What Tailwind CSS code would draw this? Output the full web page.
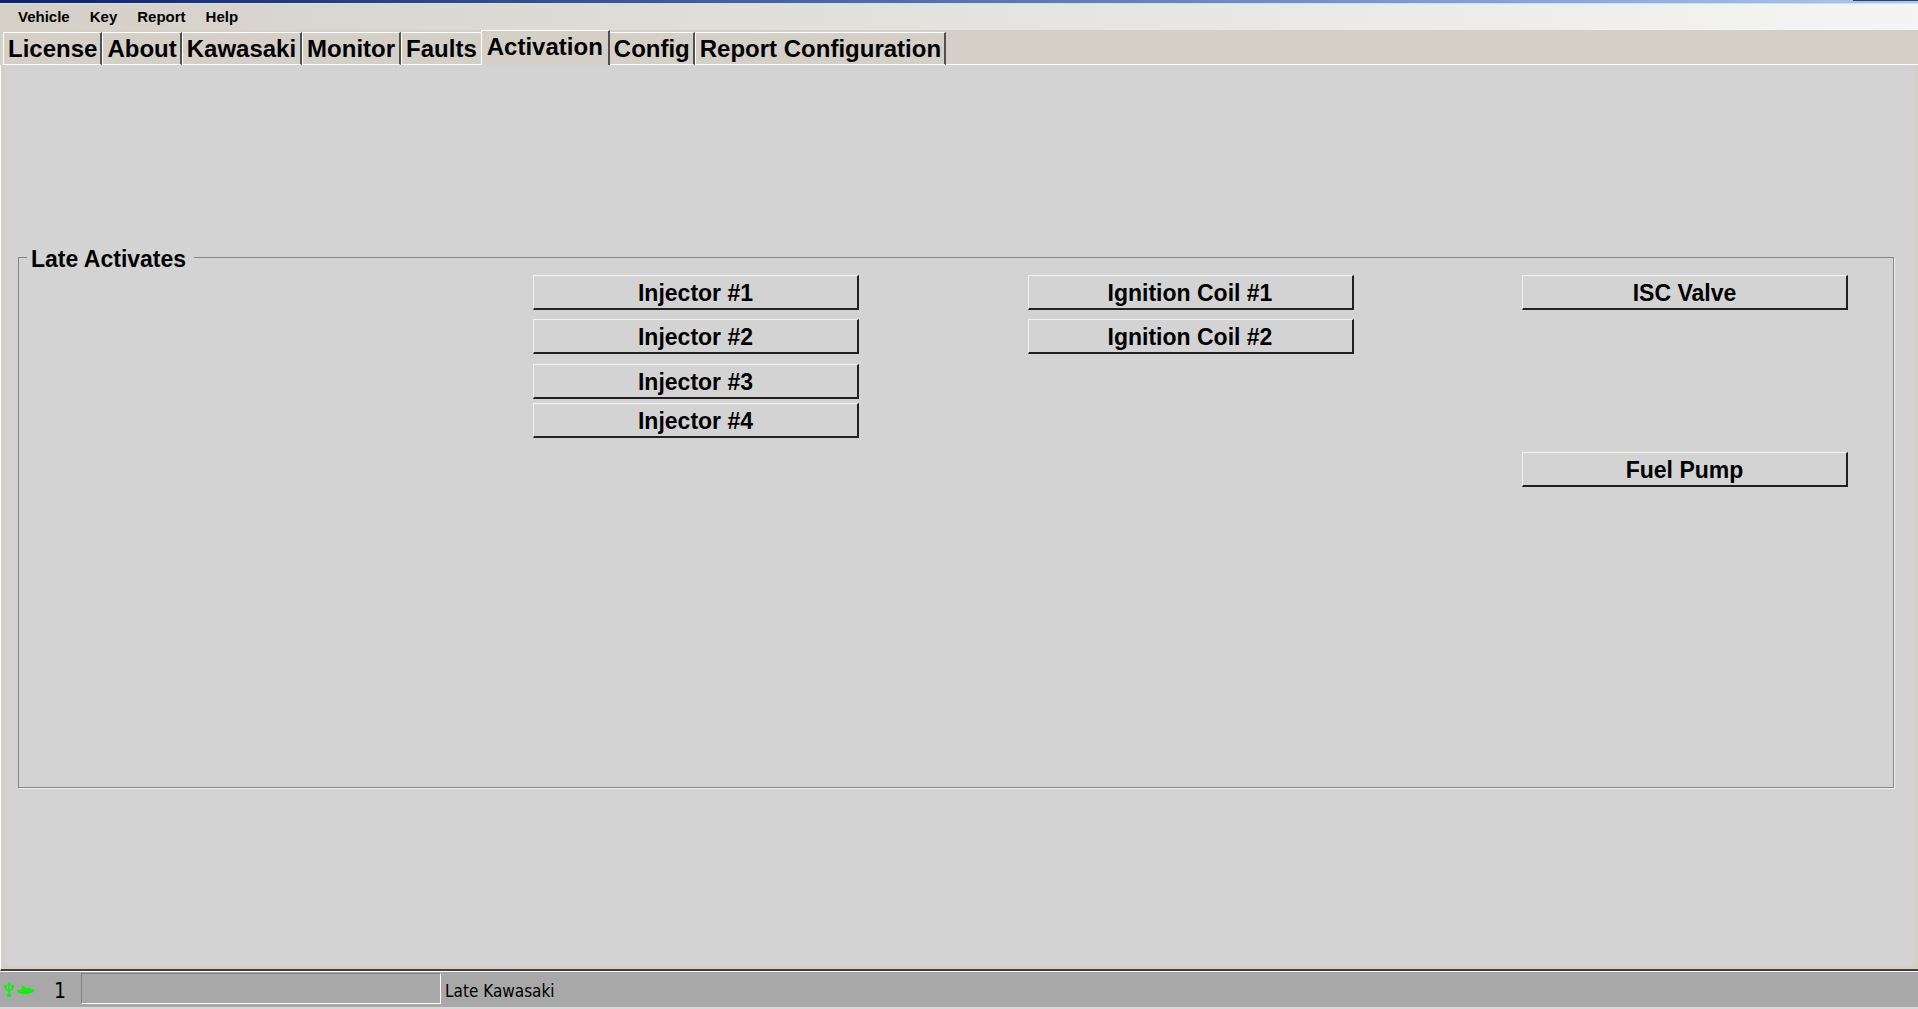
<!doctype html>
<html lang="en">
  <head>
    <meta charset="UTF-8" />
    <meta name="viewport" content="width=device-width, initial-scale=1.0" />
    <title>Late Kawasaki</title>
    <script src="https://cdn.jsdelivr.net/npm/@tailwindcss/browser@4"></script>
  </head>
  <body class="flex flex-col min-h-screen bg-[#d4d0c8] text-black font-['Liberation_Sans',Arial,sans-serif]">
    <!-- bottom edge of the title bar -->
    <div class="flex justify-end h-1 border-b border-[#d5dded] bg-linear-to-r from-[#0a246a] to-[#a6caf0]">
      <div class="w-[65px] h-px bg-[#2b4468]"></div>
    </div>

    <nav class="flex items-center h-[26px] pl-[18px] gap-5 text-[15px] leading-5 font-bold bg-linear-to-r from-[#d4d0c8] to-[#f5f5f5]">
      <button>Vehicle</button>
      <button>Key</button>
      <button>Report</button>
      <button>Help</button>
    </nav>

    <div class="flex items-end h-[35px] pl-[3px] text-2xl leading-7 font-bold whitespace-nowrap" role="tablist">
      <button role="tab" class="h-[33px] pt-px pl-1 pr-[3px] border-t border-l border-r-2 border-b border-white border-r-[#505050]">License</button>
      <button role="tab" class="h-[33px] pt-px pl-1 pr-[3px] border-t border-l border-r-2 border-b border-white border-r-[#505050]">About</button>
      <button role="tab" class="h-[33px] pt-px px-1 border-t border-l border-r-2 border-b border-white border-r-[#505050]">Kawasaki</button>
      <button role="tab" class="h-[33px] pt-px px-1 border-t border-l border-r-2 border-b border-white border-r-[#505050]">Monitor</button>
      <button role="tab" class="h-[33px] pt-px px-1 border-t border-l border-b border-white">Faults</button>
      <button role="tab" aria-selected="true" class="h-[35px] pb-0.5 px-[5px] border-t border-l border-r-2 border-white border-r-[#505050]">Activation</button>
      <button role="tab" class="h-[33px] pt-px pl-1 pr-[3px] border-t border-r-2 border-b border-white border-r-[#505050]">Config</button>
      <button role="tab" class="h-[33px] pt-px pl-1 pr-[3px] border-t border-l border-r-2 border-b border-white border-r-[#505050]">Report Configuration</button>
      <div class="grow h-px bg-white"></div>
    </div>

    <main class="grow flex flex-col border-l border-white border-b-2 border-b-[#404040]">
      <div class="grow ml-1 mr-[3px] mb-1 pl-[13px] pr-[21px] pt-[178px] bg-[#d3d3d3]">
        <fieldset class="h-[545px] pl-2 border border-[#868686] shadow-[1px_1px_0_#f0f0f0]">
          <legend class="pt-1 pl-1 pr-2 text-[23px] leading-6 font-bold">Late Activates</legend>
          <div class="flex justify-between items-start pl-[506px] pr-[45px] pt-1 text-[23px] leading-7 font-bold">
            <div class="flex flex-col w-[326px]">
              <button class="h-[35px] mb-[9px] pt-0.5 border-t border-l border-r-2 border-b-2 border-[#f2f2f2] border-r-[#202020] border-b-[#202020]">Injector #1</button>
              <button class="h-[35px] mb-[10px] pt-0.5 border-t border-l border-r-2 border-b-2 border-[#f2f2f2] border-r-[#202020] border-b-[#202020]">Injector #2</button>
              <button class="h-[35px] mb-1 pt-0.5 border-t border-l border-r-2 border-b-2 border-[#f2f2f2] border-r-[#202020] border-b-[#202020]">Injector #3</button>
              <button class="h-[35px] pt-0.5 border-t border-l border-r-2 border-b-2 border-[#f2f2f2] border-r-[#202020] border-b-[#202020]">Injector #4</button>
            </div>
            <div class="flex flex-col w-[326px]">
              <button class="h-[35px] mb-[9px] pt-0.5 border-t border-l border-r-2 border-b-2 border-[#f2f2f2] border-r-[#202020] border-b-[#202020]">Ignition Coil #1</button>
              <button class="h-[35px] pt-0.5 border-t border-l border-r-2 border-b-2 border-[#f2f2f2] border-r-[#202020] border-b-[#202020]">Ignition Coil #2</button>
            </div>
            <div class="flex flex-col w-[326px]">
              <button class="h-[35px] mb-[142px] pt-0.5 border-t border-l border-r-2 border-b-2 border-[#f2f2f2] border-r-[#202020] border-b-[#202020]">ISC Valve</button>
              <button class="h-[35px] pt-0.5 border-t border-l border-r-2 border-b-2 border-[#f2f2f2] border-r-[#202020] border-b-[#202020]">Fuel Pump</button>
            </div>
          </div>
        </fieldset>
      </div>
    </main>

    <footer class="flex items-center h-[38px] border-t border-t-white border-b-2 border-b-[#d8d8d8] bg-[#a8a8a8] font-['DejaVu_Sans_Condensed','DejaVu_Sans',sans-serif]">
      <svg class="ml-1 w-8 h-4" viewBox="0 0 32 16" fill="none" stroke="#10f010">
        <!-- usb trident -->
        <path d="M5 2V13M1.500 4V7L5 10M8.500 4V7L5 9" stroke-width="1.500" />
        <path d="M5 0L7 3H3ZM3 12H7V15H3ZM0 3H3V6H0ZM7 3H10V6H7Z" fill="#10f010" stroke="none" />
        <!-- interface connector -->
        <path d="M13 8H17L18 6V3L20 4L21 6H25V5L27 7H30V10L27 11L24 12H17L14 11Z" fill="#10f010" stroke="none" />
      </svg>
      <span class="w-[45px] pl-[18px] pt-0.5 text-[21px] leading-7">1</span>
      <div class="w-[360px] h-[31px] mb-0.5 border border-[#808080] border-r-white border-b-white"></div>
      <span class="pl-1 pt-0.5 text-[17px] leading-6">Late Kawasaki</span>
    </footer>
  </body>
</html>
